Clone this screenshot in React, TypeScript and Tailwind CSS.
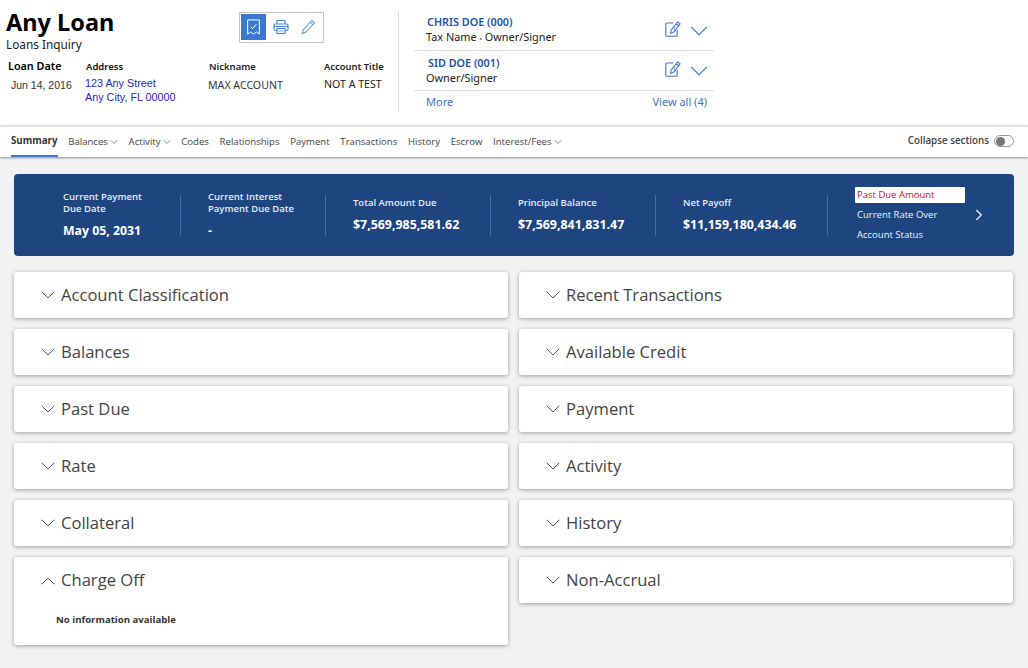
import { ChevronDown, ChevronRight, ChevronUp } from "lucide-react";

const navItems = [
  { label: "Balances", menu: true },
  { label: "Activity", menu: true },
  { label: "Codes" },
  { label: "Relationships" },
  { label: "Payment" },
  { label: "Transactions" },
  { label: "History" },
  { label: "Escrow" },
  { label: "Interest/Fees", menu: true },
];

const stats = [
  { label: "Total Amount Due", value: "$7,569,985,581.62", width: "w-[164px]" },
  { label: "Principal Balance", value: "$7,569,841,831.47", width: "w-[164px]" },
  { label: "Net Payoff", value: "$11,159,180,434.46", width: "w-[171px]" },
];

const leftCards = ["Account Classification", "Balances", "Past Due", "Rate", "Collateral"];
const rightCards = ["Recent Transactions", "Available Credit", "Payment", "Activity", "History", "Non-Accrual"];

function BookmarkCheck() {
  return (
    <svg width="15" height="18" viewBox="0 0 18 20" fill="none" stroke="white" strokeWidth="1.2">
      <path d="M2 1.5h14v17l-3.5-2.5-3.5 2.5-3.5-2.5-3.5 2.5z" />
      <path d="M5.5 9.5l2.5 2.5 4.5-5.5" />
    </svg>
  );
}

function PrinterIcon() {
  return (
    <svg width="16" height="16" viewBox="0 0 16 16" fill="none" stroke="#4f86dc" strokeWidth="1.2">
      <path d="M4 5V1.5h8V5" />
      <rect x="1" y="5" width="14" height="6.5" rx="1.5" />
      <path d="M1 7.5h14" />
      <rect x="4" y="9.5" width="8" height="5" fill="white" />
      <path d="M5.5 12h5" strokeWidth="0.8" />
    </svg>
  );
}

function PencilIcon() {
  return (
    <svg width="15" height="16" viewBox="0 0 15 16" fill="none" stroke="#6d9be6" strokeWidth="1.1">
      <path d="M10.8 1.5l2.7 2.4-8.6 9.2-3.6 1.4.9-3.7z" />
      <path d="M9.2 3.3l2.7 2.4" />
    </svg>
  );
}

function NoteEdit() {
  return (
    <svg width="16" height="16" viewBox="0 0 16 16" fill="none" stroke="#3b78d8" strokeWidth="1.1">
      <path d="M8.5 2H1.8a1 1 0 0 0-1 1v11.2a1 1 0 0 0 1 1h9.4a1 1 0 0 0 1-1V9" />
      <path d="M12.6.9l2.5 1.9-6.4 8.3-3 1.3.4-3.3z" />
      <path d="M11.2 2.8l2.5 1.9" />
      <path d="M8.4 5.2l2 5.2" strokeWidth="0.7" />
    </svg>
  );
}

function Divider() {
  return <div className="h-[41px] w-px shrink-0 bg-[#4c6c9c]" />;
}

function Person({ name, role, indent }: { name: string; role: React.ReactNode; indent: string }) {
  return (
    <div className="flex h-[40px] items-center border-b border-[#dcdcdc]">
      <div className="flex-1 pl-[12px]">
        <div className={`text-[10.8px] leading-[14px] font-semibold text-[#2450a8] ${indent}`}>{name}</div>
        <div className="text-[10.9px] leading-[15px] text-[#222]">{role}</div>
      </div>
      <div className="mt-[-3px] mr-[3px]">
        <NoteEdit />
      </div>
      <ChevronDown size={30} strokeWidth={0.85} className="mt-[1px] text-[#3f7ad6]" />
    </div>
  );
}

function Card({ title }: { title: string }) {
  return (
    <div className="flex h-[46px] items-center rounded-[3px] bg-white pl-[22px] shadow-[0_1px_4px_rgba(0,0,0,0.35)]">
      <ChevronDown size={24} strokeWidth={1} className="mr-[1px] text-[#555]" />
      <span className="text-[16.6px] text-[#444]">{title}</span>
    </div>
  );
}

export default function App() {
  return (
    <div className="h-[668px] w-[1028px] overflow-hidden bg-[#f2f2f2] font-['Open_Sans',sans-serif]">
      <header className="flex h-[125px] items-start bg-white">
        <div className="mt-[12px] flex h-[100px] w-[399px] flex-col border-r border-[#dcdcdc] pl-[6px] font-['Noto_Sans',sans-serif]">
          <div className="flex h-[45px] items-start">
            <div className="-mt-[3px] w-[233px]">
              <h1 className="text-[23.5px] leading-[26px] font-bold text-black">Any Loan</h1>
              <p className="mt-[1px] text-[11.8px] leading-[17px] text-[#222]">Loans Inquiry</p>
            </div>
            <div className="flex h-[31px] w-[85px] gap-[1px] border border-[#c4c4c4] p-[1px]">
              <div className="flex h-[26px] w-[25px] items-center justify-center bg-[#3b78d0]">
                <BookmarkCheck />
              </div>
              <div className="flex h-[26px] w-[27px] items-center justify-center">
                <PrinterIcon />
              </div>
              <div className="flex h-[26px] w-[27px] items-center justify-center">
                <PencilIcon />
              </div>
            </div>
          </div>
          <div className="mt-[1px] flex">
            <div className="w-[79px]">
              <div className="pl-[2px] text-[10.8px] leading-[16px] font-semibold text-black">Loan Date</div>
              <div className="mt-[3px] pl-[5px] text-[10.5px] leading-[17px] font-['Liberation_Sans',sans-serif] text-[#333]">Jun 14, 2016</div>
            </div>
            <div className="w-[124px]">
              <div className="pt-[2px] pl-[1px] text-[9.5px] leading-[14px] font-semibold text-[#111]">Address</div>
              <div className="mt-[2px] text-[10.8px] leading-[14px] font-['Liberation_Sans',sans-serif] text-[#2a22d8]">
                123 Any Street
                <br />
                Any City, FL 00000
              </div>
            </div>
            <div className="w-[115px]">
              <div className="pt-[2px] text-[9.5px] leading-[14px] font-semibold text-[#222]">Nickname</div>
              <div className="mt-[3px] -ml-px text-[10.6px] leading-[16px] text-[#333]">MAX ACCOUNT</div>
            </div>
            <div>
              <div className="pt-[2px] text-[9.4px] leading-[14px] font-semibold text-[#222]">Account Title</div>
              <div className="mt-[2px] text-[10.6px] leading-[16px] text-[#222]">NOT A TEST</div>
            </div>
          </div>
        </div>
        <div className="mt-[11px] ml-[15px] w-[300px] font-['Noto_Sans',sans-serif]">
          <Person
            name="CHRIS DOE (000)"
            indent="pl-[1px]"
            role={
              <>
                Tax Name <span className="text-[7px] text-[#777]">▪</span> Owner/Signer
              </>
            }
          />
          <Person name="SID DOE (001)" indent="pl-[2px]" role="Owner/Signer" />
          <div className="flex h-[22px] items-center justify-between pr-[7px] pl-[12px] text-[11px] text-[#3f72c8]">
            <span>More</span>
            <span>View all (4)</span>
          </div>
        </div>
      </header>

      <nav className="flex h-[32px] items-stretch border-t-2 border-[#e4e4e4] bg-white pr-[14px] pl-[11px] text-[9.6px] text-[#444] shadow-[0_1px_2px_rgba(0,0,0,0.4)]">
        <div className="flex items-center gap-[10.7px]">
          <span className="flex h-full items-center border-b-2 border-[#3b78d0] text-[9.7px] font-bold text-[#333]">Summary</span>
          {navItems.map((item) => (
            <span key={item.label} className="flex items-center">
              {item.label}
              {item.menu && <ChevronDown size={12} strokeWidth={1.2} className="-mr-[2px] text-[#444]" />}
            </span>
          ))}
        </div>
        <div className="ml-auto flex items-center gap-[5px] pb-[2px]">
          <span className="text-[9.8px] font-semibold text-[#444]">Collapse sections</span>
          <span className="flex h-[12px] w-[20px] items-center rounded-full border border-[#999] pl-[1px]">
            <span className="h-[9px] w-[9px] rounded-full bg-[#777]" />
          </span>
        </div>
      </nav>

      <section className="mx-[14px] mt-[17px] flex h-[82px] items-center rounded-[4px] bg-[#1e4580] pl-[49px] text-white">
        <div className="flex w-[117px] flex-col gap-[8px] pb-[1px]">
          <div className="text-[9.5px] leading-[12px] font-semibold text-[#e6ecf5]">
            Current Payment
            <br />
            Due Date
          </div>
          <div className="text-[12.3px] leading-[15px] font-bold">May 05, 2031</div>
        </div>
        <Divider />
        <div className="flex w-[144px] flex-col gap-[8px] pb-[1px] pl-[27px]">
          <div className="text-[9.5px] leading-[12px] font-semibold text-[#e6ecf5]">
            Current Interest
            <br />
            Payment Due Date
          </div>
          <div className="text-[12.3px] leading-[15px] font-bold">-</div>
        </div>
        <Divider />
        {stats.map((s) => (
          <div key={s.label} className="flex items-center">
            <div className={`flex flex-col gap-[8px] pb-[2px] pl-[27px] ${s.width}`}>
              <div className="text-[9.5px] leading-[12px] font-semibold text-[#e6ecf5]">{s.label}</div>
              <div className="text-[12.4px] leading-[15px] font-bold whitespace-nowrap">{s.value}</div>
            </div>
            <Divider />
          </div>
        ))}
        <div className="ml-[27px] flex w-[110px] flex-col gap-[4px] text-[9.5px] leading-[16px] text-[#eef2f8]">
          <div className="-mt-[1px] rounded-[1px] bg-white pl-[2px] text-[#cc1018]">Past Due Amount</div>
          <div className="pl-[2px]">Current Rate Over</div>
          <div className="pl-[2px]">Account Status</div>
        </div>
        <ChevronRight size={18} strokeWidth={2} className="ml-[5px] text-[#dde5f2]" />
      </section>

      <main className="mx-[14px] mt-[16px] grid grid-cols-[494px_494px] gap-x-[11px]">
        <div className="flex flex-col gap-[11px]">
          {leftCards.map((t) => (
            <Card key={t} title={t} />
          ))}
          <div className="h-[88px] rounded-[3px] bg-white pl-[22px] shadow-[0_1px_4px_rgba(0,0,0,0.35)]">
            <div className="flex h-[47px] items-center">
              <ChevronUp size={24} strokeWidth={1} className="mr-[1px] text-[#555]" />
              <span className="text-[16.6px] text-[#444]">Charge Off</span>
            </div>
            <div className="mt-[9px] pl-[20px] text-[9.6px] font-bold text-[#333]">No information available</div>
          </div>
        </div>
        <div className="flex flex-col gap-[11px]">
          {rightCards.map((t) => (
            <Card key={t} title={t} />
          ))}
        </div>
      </main>
    </div>
  );
}
